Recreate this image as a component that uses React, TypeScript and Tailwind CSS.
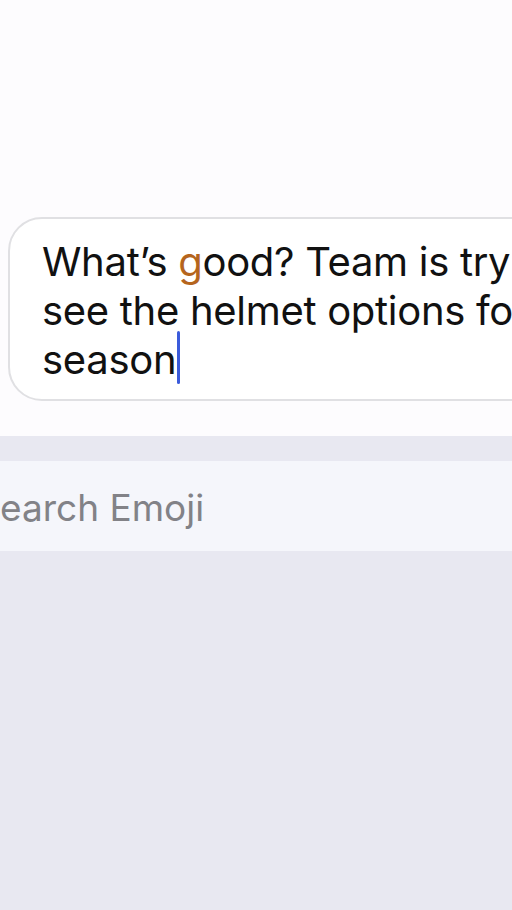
export default function App() {
  return (
    <div
      className="flex h-[910px] w-[512px] flex-col overflow-hidden bg-[#fdfcfe]"
      style={{ fontFamily: 'Inter, "Noto Sans", sans-serif' }}
    >
      <div className="flex h-[436px] shrink-0 flex-col justify-end pb-[35px] pl-2">
        <div className="w-[640px] rounded-[34px] border-2 border-[#e0e0e3] bg-white pl-8 pt-[18px] pb-[15px]">
          <p className="text-[40px] leading-[49px] tracking-[-0.3px] whitespace-nowrap text-[#111]">
            What’s <span className="text-[#b5651d]">g</span>ood? Team is trying to
            <br />
            see the helmet options for next
            <br />
            season
            <span className="relative ml-[1px] inline-block w-0">
              <span className="absolute -top-[43px] left-0 h-[53px] w-[3px] rounded-full bg-[#3b5bdb]" />
            </span>
          </p>
        </div>
      </div>

      <div className="flex flex-1 flex-col bg-[#e8e8f1] pt-[25px]">
        <div className="flex h-[90px] items-center overflow-hidden bg-[#f5f6fb]">
          <span className="whitespace-nowrap pt-[2px] text-[37px] leading-none text-[#828287]">earch Emoji</span>
        </div>
      </div>
    </div>
  );
}
